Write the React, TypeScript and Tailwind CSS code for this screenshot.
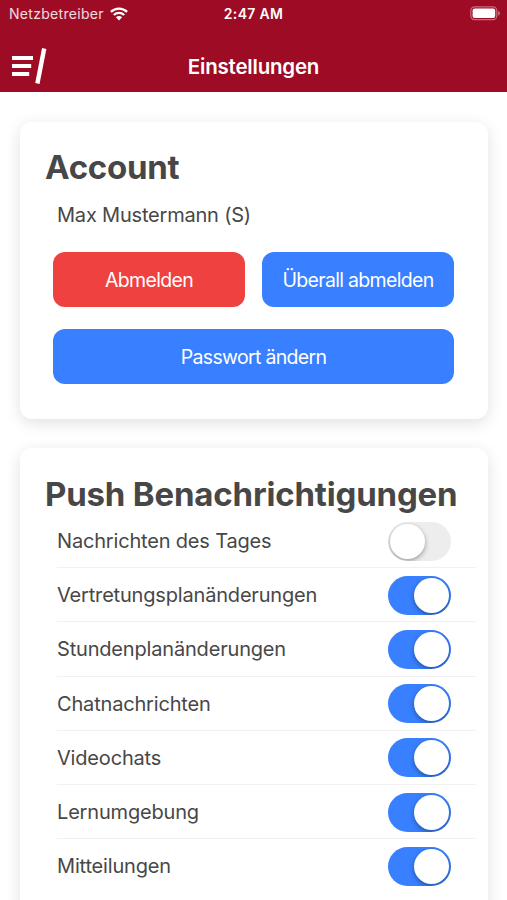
import { useState } from "react";
import { clsx } from "clsx";

const initialSettings = [
  { id: "news", label: "Nachrichten des Tages", enabled: false },
  { id: "substitutions", label: "Vertretungsplanänderungen", enabled: true },
  { id: "timetable", label: "Stundenplanänderungen", enabled: true },
  { id: "chat", label: "Chatnachrichten", enabled: true },
  { id: "video", label: "Videochats", enabled: true },
  { id: "learning", label: "Lernumgebung", enabled: true },
  { id: "messages", label: "Mitteilungen", enabled: true },
];

function WifiIcon() {
  return (
    <svg width="18" height="14" viewBox="0 0 18 14" fill="none" stroke="white" strokeWidth="2.3">
      <path d="M0.9 4.9a11.6 11.6 0 0 1 16.2 0" />
      <path d="M3.8 8a7.5 7.5 0 0 1 10.4 0" />
      <path d="M9 13.4 5.9 10.3a4.4 4.4 0 0 1 6.2 0z" fill="white" stroke="none" />
    </svg>
  );
}

function BatteryIcon() {
  return (
    <svg width="31" height="15" viewBox="0 0 31 15" fill="none">
      <rect x="0.8" y="0.8" width="26" height="12.8" rx="3.8" stroke="white" strokeOpacity="0.4" strokeWidth="1.2" />
      <rect x="2.6" y="2.6" width="22.6" height="9.3" rx="2" fill="white" />
      <path d="M28.2 5v4.6c1-.4 1.7-1.2 1.7-2.3S29.2 5.4 28.2 5z" fill="white" fillOpacity="0.45" />
    </svg>
  );
}

function MenuIcon() {
  return (
    <svg width="36" height="36" viewBox="0 0 36 36" stroke="white" fill="none">
      <path d="M1 10H22M1 18H20.2M1 26H18.2" strokeWidth="4" />
      <path d="M33.2 0.5 26.4 35.5" strokeWidth="4.4" />
    </svg>
  );
}

function Toggle({ enabled, onChange }: { enabled: boolean; onChange: () => void }) {
  return (
    <button
      role="switch"
      aria-checked={enabled}
      onClick={onChange}
      className={clsx(
        "flex h-[39px] w-[63px] items-center overflow-hidden rounded-full px-[2px] transition-colors",
        enabled ? "justify-end bg-[#3880ff]" : "justify-start bg-[#ededed]"
      )}
    >
      <span className="size-[35px] rounded-full bg-white shadow-[0_2px_5px_rgba(0,0,0,0.35)]" />
    </button>
  );
}

export default function App() {
  const [settings, setSettings] = useState(initialSettings);

  const toggleSetting = (id: string) =>
    setSettings(settings.map((s) => (s.id === id ? { ...s, enabled: !s.enabled } : s)));

  return (
    <div className="h-[900px] w-full overflow-hidden bg-white font-['Inter',sans-serif] text-[#474747]">
      <header className="h-[92px] bg-[#9e0b24] text-white">
        {/* Status bar */}
        <div className="grid h-[27px] grid-cols-3 items-center pr-[6px] pl-[9px] text-[14px]">
          <div className="flex items-center gap-[6px]">
            <span className="tracking-[0.3px] text-white/85">Netzbetreiber</span>
            <WifiIcon />
          </div>
          <span className="pr-[3px] text-center font-semibold tracking-[0.3px]">2:47 AM</span>
          <div className="flex justify-end">
            <BatteryIcon />
          </div>
        </div>
        {/* Toolbar */}
        <div className="grid h-[65px] grid-cols-[1fr_auto_1fr] items-center px-[11px] pt-[14px]">
          <button aria-label="Menü" className="-mt-[1px]">
            <MenuIcon />
          </button>
          <h1 className="pt-[2px] text-[20.5px] font-semibold tracking-[-0.2px]">Einstellungen</h1>
        </div>
      </header>

      <main className="flex flex-col gap-[29px] pt-[30px] pr-[19px] pl-[20px]">
        <section className="h-[297px] rounded-[12px] bg-white px-[25px] pt-[25px] shadow-[0_4px_16px_rgba(0,0,0,0.12)]">
          <h2 className="text-[33px] leading-[40px] font-bold tracking-[-0.25px]">Account</h2>
          <p className="mt-[13px] pl-[12px] text-[20px] leading-[30px] tracking-[-0.2px]">Max Mustermann (S)</p>
          <div className="mt-[22px] grid grid-cols-2 gap-x-[17px] gap-y-[22px] pr-[9px] pl-[8px] text-[19.5px] tracking-[-0.68px] text-white">
            <button className="h-[55px] rounded-[12px] bg-[#f04141] pt-[2px]">Abmelden</button>
            <button className="h-[55px] rounded-[12px] bg-[#3880ff] pt-[2px]">Überall abmelden</button>
            <button className="col-span-2 h-[55px] rounded-[12px] bg-[#3880ff] pt-[2px]">Passwort ändern</button>
          </div>
        </section>

        <section className="h-[520px] shrink-0 rounded-[12px] bg-white pt-[26px] pl-[25px] shadow-[0_4px_16px_rgba(0,0,0,0.12)]">
          <h2 className="text-[33px] leading-[40px] font-bold tracking-[-0.18px] whitespace-nowrap">
            Push Benachrichtigungen
          </h2>
          <ul className="pr-[12px] pl-[12px]">
            {settings.map((s) => (
              <li
                key={s.id}
                className="flex h-[54.2px] items-center justify-between border-b border-[#f1f1f1] pt-[1px] pr-[25px] last:border-b-0 last:pt-0"
              >
                <span className="text-[20px] tracking-[-0.18px] whitespace-nowrap">{s.label}</span>
                <Toggle enabled={s.enabled} onChange={() => toggleSetting(s.id)} />
              </li>
            ))}
          </ul>
        </section>
      </main>
    </div>
  );
}
